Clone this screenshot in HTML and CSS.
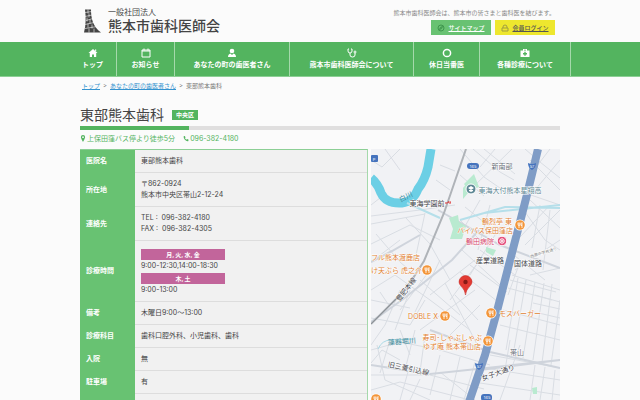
FILE: index.html
```html
<!DOCTYPE html>
<html lang="ja">
<head>
<meta charset="utf-8">
<meta name="viewport" content="width=device-width, initial-scale=1">
<title>東部熊本歯科</title>
<link rel="stylesheet" href="styles.css">
</head>
<body>
<header class="header">
  <div class="container header-inner">
    <a class="logo" href="#">
      <svg class="logo-mark" viewBox="0 0 17 23" aria-hidden="true">
        <path d="M1 0H7C7 9 9 17 17 23H0C2 15 2 8 1 0Z" fill="#444"/>
        <path d="M1 3L8 2M1 7L8 5.500M2 11L9 9M1 15L10 13M1 19L13 17M4 0V4M5 4V8M3 8V12M6 10V14M4 14V18M8 15V19M5 19V23M10 19V23" stroke="#fbfbfb" stroke-width=".6" fill="none"/>
      </svg>
      <span class="logo-text"><span class="logo-small">一般社団法人</span><span class="logo-name">熊本市歯科医師会</span></span>
    </a>
    <div class="header-side">
      <p class="tagline">熊本市歯科医師会は、熊本市の皆さまと歯科医を結びます。</p>
      <div class="header-links">
        <a class="header-link sitemap" href="#"><svg class="link-icon" viewBox="0 0 8 8"><circle cx="4" cy="4" r="3"/><path d="M5.500 2.500L4.500 4.500L2.500 5.500L3.500 3.500Z"/></svg><span class="link-label">サイトマップ</span></a>
        <a class="header-link login" href="#"><svg class="link-icon" viewBox="0 0 8 8"><path d="M1 4H7V7H1ZM2 4V3Q2 1 4 1T6 3V4"/></svg><span class="link-label">会員ログイン</span></a>
      </div>
    </div>
  </div>
</header>
<nav class="nav">
  <div class="nav-inner">
    <a class="nav-item" href="#"><svg class="nav-icon" viewBox="0 0 10 10"><path d="M5 1L9.500 5H8.200V9H6V6.500H4V9H1.800V5H.5ZM7 1.500H8.200V3.500L7 2.500Z"/></svg>トップ</a>
    <a class="nav-item" href="#"><svg class="nav-icon" viewBox="0 0 10 10"><path class="line" d="M1 2H9V9H1ZM1 3H9M3 .5V2.500M7 .5V2.500"/></svg>お知らせ</a>
    <a class="nav-item" href="#"><svg class="nav-icon" viewBox="0 0 10 10"><circle cx="5" cy="3" r="2.300"/><path d="M1 9Q1 6 3.500 5.500L5 7L6.500 5.500Q9 6 9 9Z"/></svg>あなたの町の歯医者さん</a>
    <a class="nav-item" href="#"><svg class="nav-icon" viewBox="0 0 10 10"><path class="line" d="M2 1H1V3Q1 5 3 5T5 3V1H4M3 5V7Q3 9 5.500 9T8 7V5"/><circle class="line" cx="8" cy="4" r="1"/></svg>熊本市歯科医師会について</a>
    <a class="nav-item" href="#"><svg class="nav-icon" viewBox="0 0 10 10"><circle class="line ring" cx="5" cy="5" r="3.600"/></svg>休日当番医</a>
    <a class="nav-item" href="#"><svg class="nav-icon" viewBox="0 0 10 10"><path fill-rule="evenodd" d="M3 2.500V1H7V2.500H9.500V9H.5V2.500ZM4 2.500H6V1.800H4ZM4.300 3.800V5H3V6.400H4.300V7.700H5.700V6.400H7V5H5.700V3.800Z"/></svg>各種診療について</a>
  </div>
</nav>
<main class="container">
  <div class="breadcrumb"><a href="#">トップ</a><span>&gt;</span><a href="#">あなたの町の歯医者さん</a><span>&gt;</span>東部熊本歯科</div>
  <div class="heading"><h1 class="title">東部熊本歯科</h1><span class="area">中央区</span></div>
  <div class="rule"></div>
  <div class="contact">
    <span><svg class="contact-icon" viewBox="0 0 6 8"><path fill-rule="evenodd" d="M3 0A2.400 2.400 0 0 1 5.400 2.500Q5.400 4 3 8Q.6 4 .6 2.500A2.400 2.400 0 0 1 3 0ZM3 1.500A1 1 0 0 0 3 3.500A1 1 0 0 0 3 1.500Z"/></svg>上保田窪バス停より徒歩5分</span>
    <span><svg class="contact-icon" viewBox="0 0 6 8"><path d="M.3 1.500L1.700 1L2.500 2.800L1.800 3.500Q2.300 4.700 3.500 5.300L4.200 4.600L6 5.500L5.500 7Q3.500 7.500 1.700 5.500Q0 3.500 .3 1.500Z"/></svg>096-382-4180</span>
  </div>
  <div class="columns">
    <table class="info">
      <tbody>
      <tr><th scope="row">医院名</th><td>東部熊本歯科</td></tr>
      <tr><th scope="row">所在地</th><td>〒862-0924<br>熊本市中央区帯山2-12-24</td></tr>
      <tr><th scope="row">連絡先</th><td>TEL : &nbsp;096-382-4180<br>FAX : &nbsp;096-382-4305</td></tr>
      <tr><th scope="row">診療時間</th><td><div class="days">月, 火, 水, 金</div>9:00-12:30,14:00-18:30<div class="days">木, 土</div>9:00-13:00</td></tr>
      <tr><th scope="row">備考</th><td>木曜日9:00〜13:00</td></tr>
      <tr><th scope="row">診療科目</th><td>歯科口腔外科、小児歯科、歯科</td></tr>
      <tr><th scope="row">入院</th><td>無</td></tr>
      <tr><th scope="row">駐車場</th><td>有</td></tr>
      <tr><th scope="row">&nbsp;</th><td></td></tr>
      </tbody>
    </table>
    <svg class="map" viewBox="371 149 189 251" role="img" aria-label="地図">
      <rect x="371" y="149" width="189" height="251" fill="#f1f2f5"/>
      <g class="street">
        <path d="M371 160L382 167L400 149M371 216L420 210L455 205M371 224L425 214M371 244L410 225L440 240M385 149L400 170M376 234L400 262L415 275M406 218L430 244L450 280M425 213L415 260M440 165L455 171M436 180L450 190M371 262L400 240M371 205L380 198L390 204"/>
        <path d="M460 149L484 177L510 195M473 149L500 172L514 180M484 149L515 174M495 149L480 167M512 149L470 190M525 149L540 162L560 178M538 149L527 180M550 149L530 175M560 160L535 190M530 160L560 190M525 193L560 205M460 175L484 196M465 207L500 235M460 220L485 245M480 200L460 235M490 205L478 250M495 235L470 275M480 250L515 275M462 250L500 285"/>
        <path d="M520 237L550 205M525 245L560 210M515 256L545 280M525 212L545 240L560 250M530 200L560 228M515 270L560 240M530 275L560 268M512 275L560 290M520 262L508 295M540 205L532 248M550 210L543 270"/>
        <path d="M371 290L395 275L430 300L470 330M371 300L410 308M380 292L392 310M371 318L410 325L425 300M400 290L385 325M410 290L395 330M420 280L460 315M430 270L400 310M440 260L415 312M430 295L475 260M420 330L475 290M440 345L480 305M455 295L478 320M445 283L480 350M460 272L502 305M470 265L507 292M480 260L450 300"/>
        <path d="M503 310L560 325M500 325L560 340M490 355L560 368M485 368L560 380M480 383L560 395M510 280L556 292M508 288L552 300M518 278L506 350M526 280L513 355M535 282L523 358M544 283L533 360M552 284L542 363M560 300L551 365M535 295L560 302M533 303L560 309M530 311L560 318M510 340L505 370M520 345L500 400M535 365L530 400M545 367L540 400M555 370L552 400"/>
        <path d="M371 350L400 342L440 350L490 365M371 375L430 375L484 389M377 345L385 380L430 400M390 340L380 373M400 330L410 355M415 330L405 370M425 335L420 372M371 390L400 382L470 400M410 365L400 400M440 355L430 395M460 357L450 400M475 362L464 400M371 363L382 350L400 360M440 372L475 400M420 379L410 400M385 325L371 345"/>
        <path class="wide" d="M371 262L392 251L420 235M371 322L402 300L452 260L479 230M438 210L500 245L560 268M371 365L430 374L560 360M430 330L490 352L560 368M480 370L560 360"/>
      </g>
      <g fill="#b9ead0">
        <path d="M464 184L474 174L479 187L469 191Z"/><path d="M449 218L458 215L459 222L466 226L462 239L450 239L453 229Z"/><path d="M486 247L496 250L493 256L486 252ZM532 388L537 387V394H533Z"/><path d="M463 188L468 182V193L463 199Z"/>
      </g>
      <path d="M371 178Q378 184 381 193Q386 204 402 203Q413 202 418 189Q425 180 428 167L431 149" fill="none" stroke="#6ccfe5" stroke-width="9"/>
      <path d="M407 203L440 218M460 220L505 207L560 208M484 213L560 205" fill="none" stroke="#b5dfea" stroke-width="2"/>
      <path d="M378 349Q382 340 391 340L414 339" fill="none" stroke="#a9d9e5" stroke-width="1"/>
      <path d="M466 149L444 213L424 261L406 289L371 324" fill="none" stroke="#afb3b8" stroke-width="2"/>
      <path d="M371 324L406 289" fill="none" stroke="#8d9298" stroke-width="1"/>
      <path d="M538 149Q526 200 514 245L496 315L485 355L468 405" fill="none" stroke="#7f9cc6" stroke-width="8"/>
      <g class="shield"><rect x="371" y="155" width="7" height="7" rx="1"/><rect x="467" y="163" width="12" height="6" rx="3"/><path d="M528 163Q532 165 536 163Q536 168 532 170Q528 168 528 163Z"/><path d="M475 363Q479 365 483 363Q483 368 479 370Q475 368 475 363Z"/><rect x="481" y="394" width="11" height="7" rx="3"/></g>
      <g class="mini"><text x="374" y="161">P</text><text x="473" y="168">145</text><text x="532" y="168">57</text><text x="479" y="368">57</text><text x="487" y="399">145</text></g>
      <g class="label">
        <text x="502" y="169">新南部</text>
        <text class="dark" x="427" y="206">東海学園前</text>
        <text class="school" x="510" y="193">東海大付熊本星翔高</text>
        <text class="dark" x="490" y="263">産業道路</text>
        <text class="dark" x="528" y="266">国体道路</text>
        <text class="thin" transform="translate(544 254) rotate(-18)">西原中学校通り</text>
        <text class="dark" transform="translate(408 291) rotate(-52)">豊肥本線</text>
        <text class="water" transform="translate(407 199) rotate(-27)">白川</text>
        <text class="water" transform="translate(402 344) rotate(-4)">藻器堀川</text>
        <text x="517" y="355">帯山</text>
        <text class="dark" transform="translate(408 371) rotate(12)">旧三菱引込線</text>
        <text class="dark" transform="translate(499 375) rotate(-20)">女子大通り</text>
      </g>
      <g class="shop">
        <text x="371" y="260" class="start">フル熊本渡鹿店</text>
        <text x="371" y="273" class="start">け天ぷら 虎之介</text>
        <text x="512" y="224" class="end">鶴烈亭 東</text>
        <text x="513" y="233" class="end">バイパス保田窪店</text>
        <text x="438" y="319" class="end">DOBLE X</text>
        <text x="499" y="316" class="start">モスバーガー</text>
        <text x="482" y="340" class="end">寿司･しゃぶしゃぶ</text>
        <text x="481" y="349" class="end">ゆず庵 熊本帯山店</text>
      </g>
      <text class="hospital" x="494" y="244">鶴田病院</text>
      <path d="M445 203H447Q449 203 449 201M450 204V202H451" stroke="#d33" fill="none"/>
      <defs><g id="food"><circle r="5.500" fill="#fff"/><circle r="4.800" fill="#f39539"/><path d="M-2 -2.500V-.5Q-2 .5 -1 .5T0 -.5V-2.500M-1 -2.500V3M2 3V-2.500Q1 -2 1 .5H2" fill="none" stroke="#fff" stroke-width=".8"/></g></defs>
      <use href="#food" x="427" y="270"/><use href="#food" x="520" y="225"/><use href="#food" x="445" y="316"/><use href="#food" x="491" y="313"/><use href="#food" x="488" y="341"/><use href="#food" x="376" y="399"/>
      <g transform="translate(471 189)"><circle r="5" fill="#5d8794" stroke="#fff"/><path d="M-3 -1L0 -3L3 -1L0 1ZM-2 1V2L0 3L2 2V1" fill="#fff"/></g>
      <g transform="translate(502 241)"><circle r="4.800" fill="#e6537f" stroke="#fff"/><circle r="2.200" fill="none" stroke="#fff"/><path d="M-1 0H1M0 -1V1" stroke="#fff"/></g>
      <path d="M465.500 295Q465 290 461 286Q459 284 459 282A6.500 6.500 0 0 1 472 282Q472 284 470 286Q466 290 465.500 295Z" fill="#e23b33" stroke="#c5221f" stroke-width=".5"/><circle cx="465.500" cy="282" r="2.200" fill="#861b16"/>
    </svg>
  </div>
</main>
</body>
</html>
```
FILE: styles.css
```css
* { box-sizing: border-box; }
body {
  margin: 0;
  height: 100vh;
  overflow: hidden;
  background: #fbfbfb;
  color: #444;
  font-family: Inter, "Noto Sans CJK JP", sans-serif;
  font-size: 7px;
  line-height: 11px;
}
p, h1 { margin: 0; }
svg { display: block; }
.container { width: 75%; margin: 0 auto; }

.header-inner { display: flex; justify-content: space-between; height: 42px; padding: 8px 5px 0 4px; }
.logo { display: flex; gap: 7px; color: #444; text-decoration: none; }
.logo-mark { width: 17px; height: 24px; margin-top: 1px; }
.logo-text { display: flex; flex-direction: column; }
.logo-small { font-size: 8px; line-height: 9px; }
.logo-name { font-size: 14px; line-height: 17px; font-weight: 500; }
.header-side { display: flex; flex-direction: column; align-items: flex-end; }
.tagline { font-size: 6px; line-height: 10px; color: #888; }
.header-links { display: flex; gap: 4px; margin-top: 2px; }
.header-link { display: flex; align-items: center; justify-content: center; gap: 3px; width: 60px; height: 15px; font-size: 6px; text-decoration: none; }
.link-label { text-decoration: underline; font-weight: 500; }
.link-icon { width: 8px; height: 8px; fill: none; stroke: currentColor; opacity: .5; }
.sitemap { background: #68c272; color: #fff; }
.sitemap .link-icon { color: #176b2b; }
.login { background: #eee72e; color: #555; }

.nav { background: #53b45f; border-bottom: 1px solid #8ccf95; }
.nav-inner { display: grid; grid-template-columns: 48fr 58fr 115fr 124fr 66fr 91fr; width: calc(75% + 22px); margin: 0 auto; }
.nav-item { display: flex; flex-direction: column; align-items: center; gap: 1px; height: 34px; padding-top: 6px; border-right: 1px solid #a5d9ab; color: #fff; font-weight: 700; text-decoration: none; white-space: nowrap; }
.nav-icon { width: 10px; height: 10px; fill: #fff; }
.nav-icon .line { fill: none; stroke: #fff; }
.nav-icon .ring { stroke-width: 1.5; }

.breadcrumb { display: flex; gap: 3px; padding: 3px 2px 0; font-size: 6px; color: #777; }
.breadcrumb a { color: #3593cf; }
.heading { display: flex; align-items: center; gap: 8px; height: 22px; margin-top: 13px; }
.title { font-size: 14px; line-height: 22px; font-weight: 400; }
.area { padding: 0 4px; background: #53b45f; color: #fff; font-size: 6px; font-weight: 700; line-height: 10px; }
.rule { height: 4px; background: linear-gradient(to right, #53b45f 109px, #e0dfdf 109px); }
.contact { display: flex; gap: 8px; margin-top: 3px; color: #53b45f; }
.contact span { display: flex; align-items: center; gap: 1px; }
.contact-icon { width: 6px; height: 7px; fill: currentColor; }

.columns { display: flex; gap: 3px; align-items: flex-start; margin-top: 5px; }
.info { width: 60%; border-collapse: separate; border-spacing: 0; border-top: 1px solid #8ccf95; border-right: 1px solid #a5d9ab; background: #f1f1f1; }
.info th, .info td { padding: 5px 6px 6px; text-align: left; vertical-align: middle; }
.info th { width: 55px; background: #68c272; color: #fff; border-bottom: 1px solid #68c272; }
.info td { border-bottom: 1px solid #ddd; }
.days { width: 84px; margin: 2px 0 0; background: #c2659b; color: #fff; text-align: center; font-size: 6px; font-weight: 700; }
.days:first-child { margin-top: 3px; }
.map { flex: 1; min-width: 0; }

.map text { font-size: 7px; text-anchor: middle; stroke: #fff; stroke-width: 1px; paint-order: stroke; }
.map .street { fill: none; stroke: #d9dde3; stroke-width: 1; }
.map .wide { stroke: #cfd4dc; stroke-width: 2; }
.map .shield { fill: #4573bd; }
.map .mini text { fill: #fff; font-size: 4px; stroke: none; }
.map .label { fill: #686f78; }
.map .label .dark { fill: #3f444a; }
.map .label .school { fill: #5d8794; }
.map .label .water { fill: #438d9c; stroke: none; }
.map .label .thin { fill: #888; font-size: 4px; }
.map .shop text { fill: #df7f32; }
.map .shop .start { text-anchor: start; }
.map .shop .end { text-anchor: end; }
.map .hospital { fill: #d6456b; text-anchor: end; }
```
